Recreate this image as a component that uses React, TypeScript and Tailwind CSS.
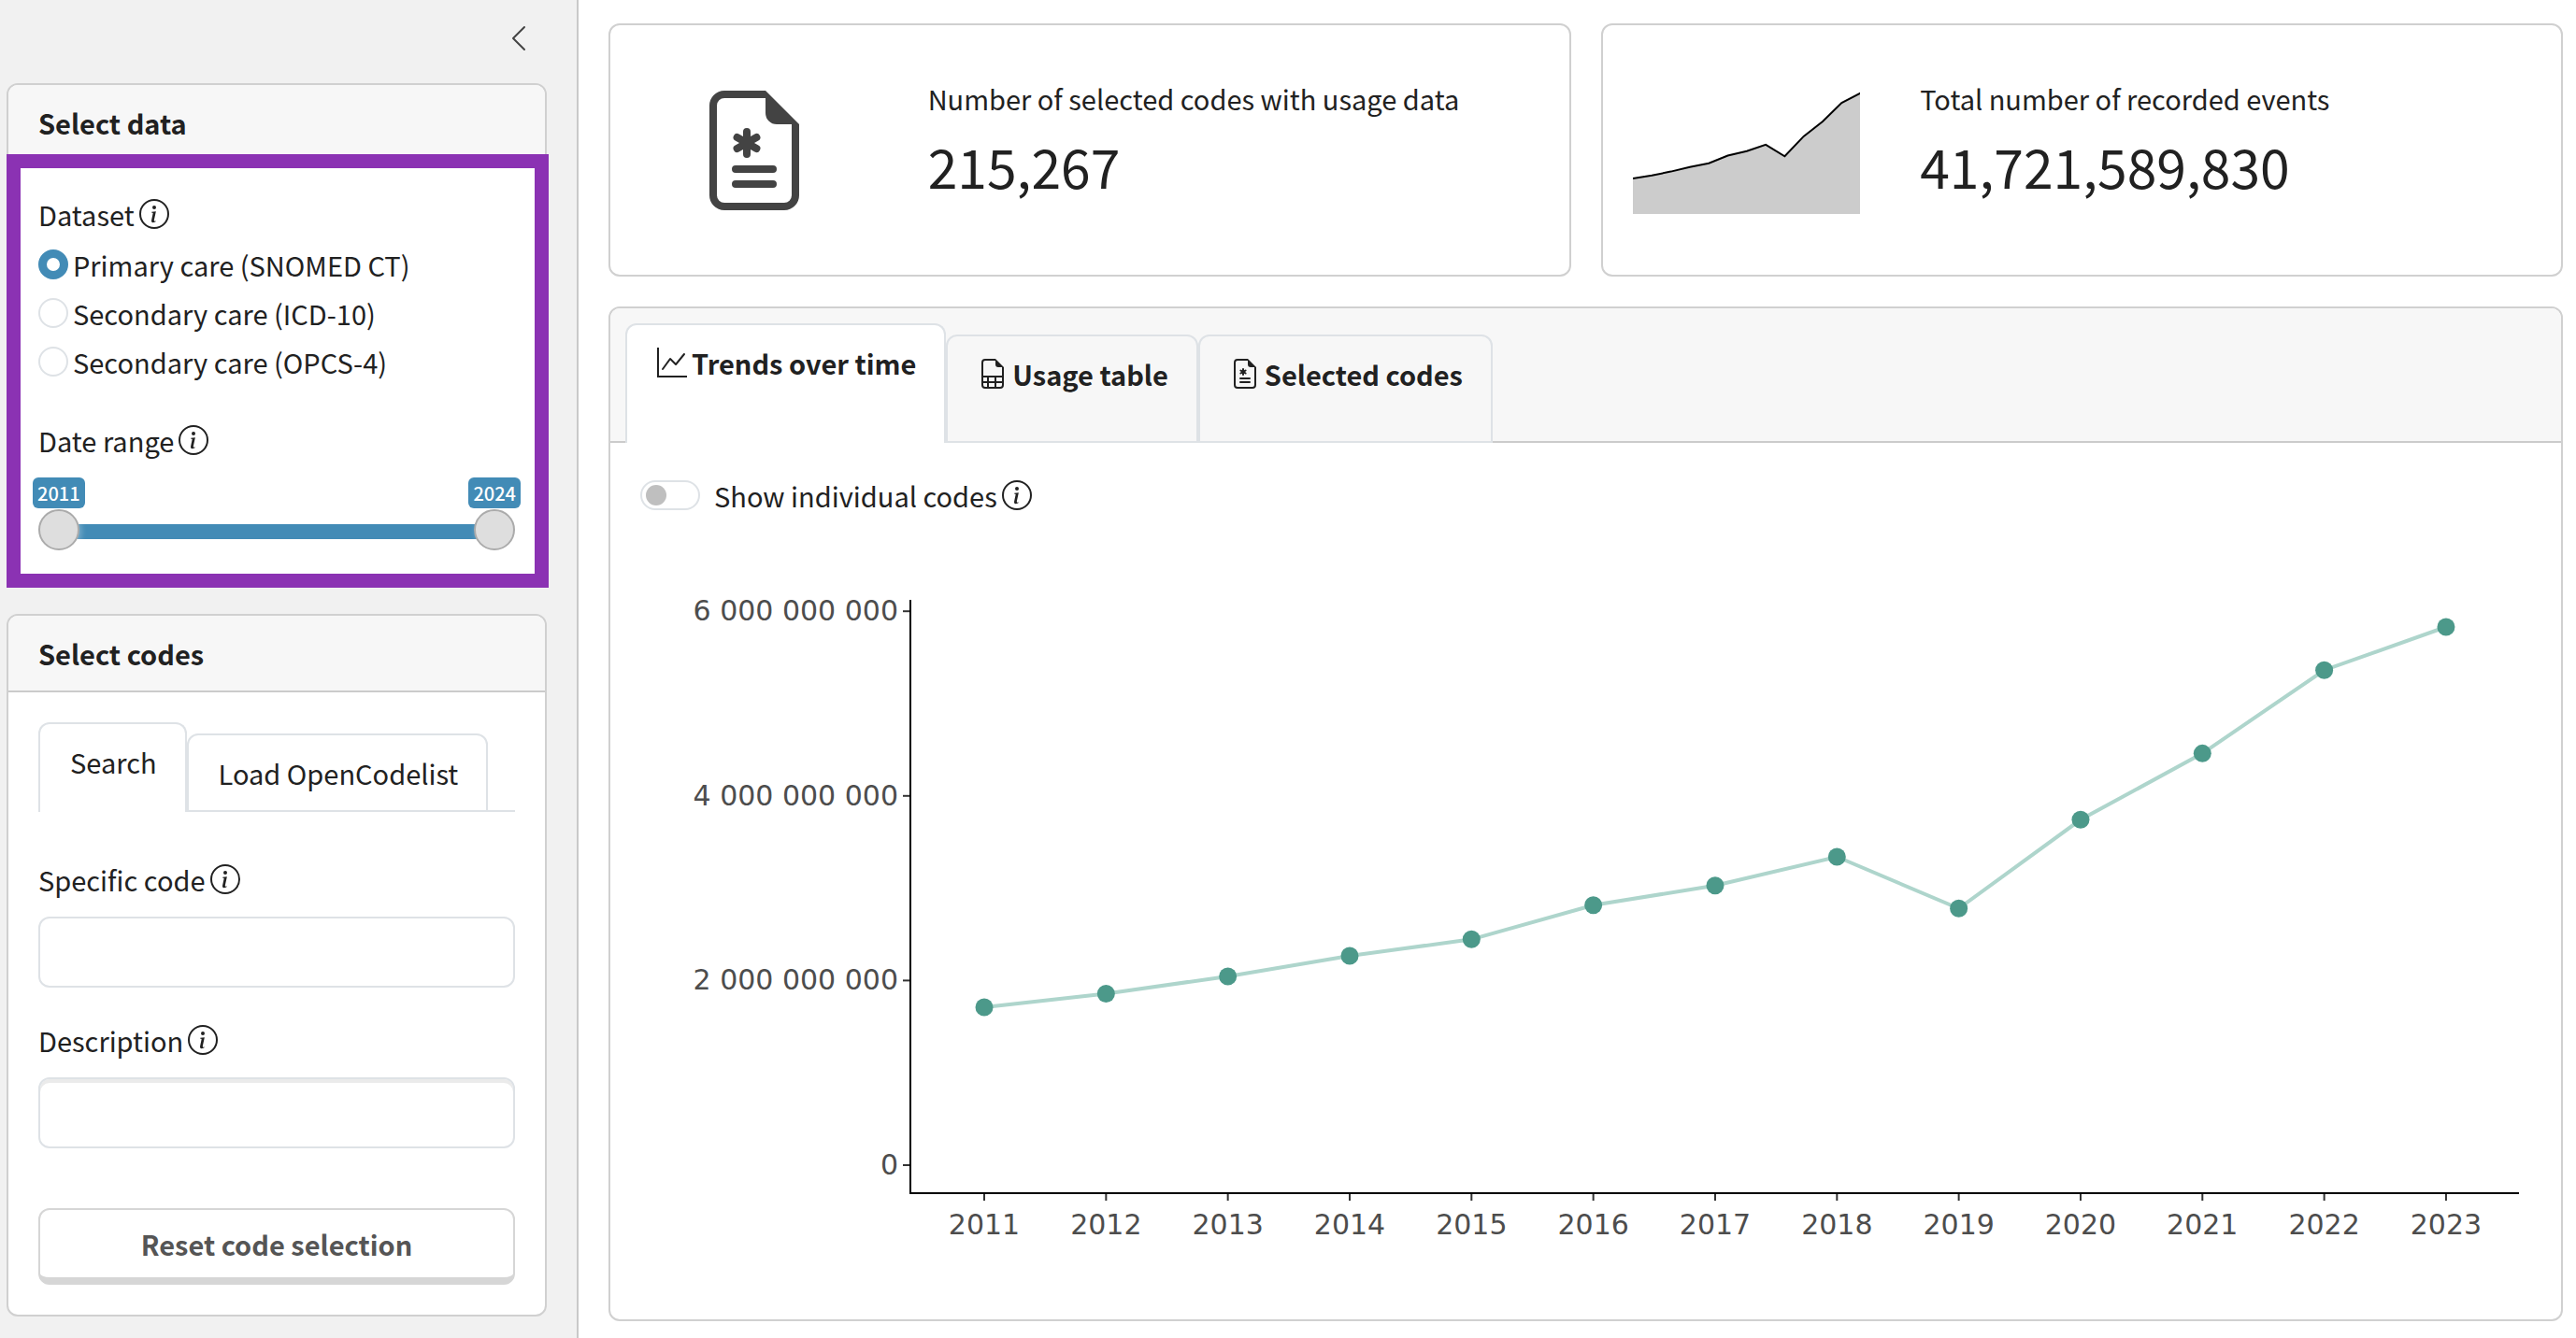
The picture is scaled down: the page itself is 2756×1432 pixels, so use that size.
import { useState, type ReactNode } from "react";
import {
  BsChevronLeft,
  BsFileEarmarkMedical,
  BsFileEarmarkSpreadsheet,
  BsGraphUp,
  BsInfoCircle,
} from "react-icons/bs";

const YEARS = [2011, 2012, 2013, 2014, 2015, 2016, 2017, 2018, 2019, 2020, 2021, 2022, 2023];
// Recorded events per year, in millions.
const EVENTS = [1711, 1857, 2045, 2267, 2446, 2816, 3029, 3340, 2780, 3742, 4460, 5362, 5830];

function InfoButton({ label }: { label: string }) {
  return (
    <button type="button" aria-label={label} className="shrink-0">
      <BsInfoCircle className="size-8" />
    </button>
  );
}

function CardHeader({ children }: { children: ReactNode }) {
  return (
    <h2 className="rounded-t-[10px] border-b-2 border-[#cbcbcb] bg-[#f7f7f7] px-8 py-4 font-bold">
      {children}
    </h2>
  );
}

function DatasetOptions() {
  const options = ["Primary care (SNOMED CT)", "Secondary care (ICD-10)", "Secondary care (OPCS-4)"];
  const [selected, setSelected] = useState(options[0]);
  return (
    <div role="radiogroup" aria-labelledby="dataset-label" className="mt-1.5 flex flex-col gap-1">
      {options.map((option) => (
        <label key={option} className="flex items-center gap-[5px]">
          <input
            type="radio"
            name="dataset"
            value={option}
            checked={selected === option}
            onChange={() => setSelected(option)}
            className="size-8 shrink-0 appearance-none rounded-full border-2 border-[#dee2e6] bg-white checked:border-[9px] checked:border-[#428bb6]"
          />
          {option}
        </label>
      ))}
    </div>
  );
}

const THUMB =
  "pointer-events-none absolute inset-0 h-11 w-full appearance-none bg-transparent [&::-webkit-slider-thumb]:pointer-events-auto [&::-webkit-slider-thumb]:size-11 [&::-webkit-slider-thumb]:appearance-none [&::-webkit-slider-thumb]:rounded-full [&::-webkit-slider-thumb]:border-2 [&::-webkit-slider-thumb]:border-[#ababab] [&::-webkit-slider-thumb]:bg-[#dedede] [&::-webkit-slider-thumb]:shadow-[2px_2px_6px_rgba(255,255,255,0.3)]";

function DateRange() {
  const [from, setFrom] = useState(2011);
  const [to, setTo] = useState(2024);
  return (
    <div className="mt-4">
      <div className="-mx-1.5 flex justify-between text-[20px] leading-[33px] text-white">
        <output className="rounded-md bg-[#428bb6] px-[5px] font-medium">{from}</output>
        <output className="rounded-md bg-[#428bb6] px-[5px] font-medium">{to}</output>
      </div>
      <div className="relative mt-px flex h-11 items-center px-5 pt-1">
        <div className="h-4 w-full bg-[#428bb6]" />
        <input
          type="range"
          aria-label="First year"
          min={2011}
          max={2024}
          value={from}
          onChange={(e) => setFrom(Math.min(Number(e.target.value), to))}
          className={THUMB}
        />
        <input
          type="range"
          aria-label="Last year"
          min={2011}
          max={2024}
          value={to}
          onChange={(e) => setTo(Math.max(Number(e.target.value), from))}
          className={THUMB}
        />
      </div>
    </div>
  );
}

function Sidebar() {
  return (
    <aside className="flex w-[619px] shrink-0 flex-col border-r-2 border-[#c9c9c9] bg-[#f1f1f1] pt-[25px] pr-8 pb-6 pl-[7px]">
      <button type="button" aria-label="Collapse sidebar" className="mr-[14px] self-end text-[#444444]">
        <BsChevronLeft className="size-8" />
      </button>

      <section className="mt-8 rounded-xl border-2 border-[#d0d0d0] bg-white">
        <CardHeader>Select data</CardHeader>
        <div className="relative px-8 pt-8 pb-9">
          <div className="flex items-center gap-[5px]">
            <span id="dataset-label">Dataset</span>
            <InfoButton label="About datasets" />
          </div>
          <DatasetOptions />
          <div className="mt-9 flex items-center gap-[5px]">
            <span>Date range</span>
            <InfoButton label="About the date range" />
          </div>
          <DateRange />
          <div className="pointer-events-none absolute -top-2 -right-1 -bottom-1 -left-0.5 border-[15px] border-[#8b32b3]" />
        </div>
      </section>

      <section className="mt-[30px] rounded-xl border-2 border-[#d0d0d0] bg-white">
        <CardHeader>Select codes</CardHeader>
        <div className="p-8">
          <div role="tablist" className="flex items-end border-b-2 border-[#dee2e6]">
            <button
              type="button"
              role="tab"
              aria-selected="true"
              className="-mb-0.5 flex h-24 items-start rounded-t-xl border-2 border-b-0 border-[#dee2e6] bg-white pt-4 pr-[30px] pl-8"
            >
              Search
            </button>
            <button
              type="button"
              role="tab"
              aria-selected="false"
              className="-mb-0.5 flex h-[84px] items-start rounded-t-xl border-2 border-[#dee2e6] bg-white pt-4 pr-[30px] pl-8"
            >
              Load OpenCodelist
            </button>
          </div>
          <div className="mt-12 flex items-center gap-[5px]">
            <label htmlFor="code">Specific code</label>
            <InfoButton label="About specific codes" />
          </div>
          <input
            id="code"
            type="text"
            className="mt-4 block h-[76px] w-full rounded-xl border-2 border-[#dee2e6] bg-white px-6"
          />
          <div className="mt-8 flex items-center gap-[5px]">
            <label htmlFor="description">Description</label>
            <InfoButton label="About descriptions" />
          </div>
          <input
            id="description"
            type="text"
            className="mt-4 block h-[76px] w-full rounded-xl border-2 border-[#dee2e6] bg-white px-6 shadow-[inset_0_4px_0_#ebebeb]"
          />
          <button
            type="button"
            className="mt-16 block h-[82px] w-full rounded-xl border-2 border-b-8 border-[#d6d6d6] bg-white font-bold text-[#555555]"
          >
            Reset code selection
          </button>
        </div>
      </section>
    </aside>
  );
}

function ValueBox({ title, value, showcase }: { title: string; value: string; showcase: ReactNode }) {
  return (
    <section className="flex h-[271px] rounded-xl border-2 border-[#d0d0d0] bg-white">
      <div className="flex w-[30%] items-center justify-center px-8">{showcase}</div>
      <div className="flex-1 px-8 pt-[54px]">
        <p>{title}</p>
        <p className="mt-2.5 text-[57px] leading-[76px]">{value}</p>
      </div>
    </section>
  );
}

function Sparkline() {
  const points = EVENTS.map((v, i) => `${(i * 244) / 12},${(136 - v * 0.0222).toFixed(1)}`).join(" ");
  return (
    <svg viewBox="0 0 244 136" preserveAspectRatio="none" className="h-[136px] w-full" aria-hidden="true">
      <polygon points={`0,136 ${points} 244,136`} fill="#cccccc" />
      <polyline points={points} fill="none" stroke="#000" strokeWidth="2" />
    </svg>
  );
}

function TrendChart() {
  const x = (i: number) => 368 + i * 130.33;
  const y = (v: number) => 667 - v * 0.0988;
  return (
    <svg
      viewBox="0 0 2023 800"
      role="img"
      aria-label="Recorded events per year"
      className="mt-[26px] block w-full font-['DejaVu_Sans',sans-serif] text-[30px]"
    >
      {[0, 2000, 4000, 6000].map((v) => (
        <g key={v}>
          <line x1="281" x2="289" y1={y(v)} y2={y(v)} stroke="#333" strokeWidth="2" />
          <text x="276" y={y(v) + 10} textAnchor="end" fill="#4d4d4d">
            {v === 0 ? "0" : `${v / 1000} 000 000 000`}
          </text>
        </g>
      ))}
      {YEARS.map((year, i) => (
        <g key={year}>
          <line x1={x(i)} x2={x(i)} y1="697" y2="705" stroke="#333" strokeWidth="2" />
          <text x={x(i)} y="741" textAnchor="middle" fill="#4d4d4d">
            {year}
          </text>
        </g>
      ))}
      <path d="M289 62V697H2010" fill="none" stroke="#000" strokeWidth="2" />
      <polyline
        points={EVENTS.map((v, i) => `${x(i)},${y(v)}`).join(" ")}
        fill="none"
        stroke="#aed5cc"
        strokeWidth="4"
      />
      {EVENTS.map((v, i) => (
        <circle key={YEARS[i]} cx={x(i)} cy={y(v)} r="9.5" fill="#4c998a" />
      ))}
    </svg>
  );
}

const TABS = [
  { label: "Trends over time", Icon: BsGraphUp },
  { label: "Usage table", Icon: BsFileEarmarkSpreadsheet },
  { label: "Selected codes", Icon: BsFileEarmarkMedical },
];

export default function App() {
  return (
    <div className="flex min-h-screen bg-white font-['Noto_Sans_CJK_SC','Noto_Sans',sans-serif] text-[29px] leading-[48px] text-[#212121]">
      <Sidebar />
      <main className="min-w-0 flex-1 pt-[25px] pr-[14px] pb-[18px] pl-8">
        <div className="grid grid-cols-2 gap-8">
          <ValueBox
            title="Number of selected codes with usage data"
            value="215,267"
            showcase={<BsFileEarmarkMedical className="size-32 text-[#434343]" />}
          />
          <ValueBox title="Total number of recorded events" value="41,721,589,830" showcase={<Sparkline />} />
        </div>

        <section className="mt-8 rounded-xl border-2 border-[#d0d0d0] bg-white">
          <div
            role="tablist"
            className="flex items-end rounded-t-[10px] border-b-2 border-[#cbcbcb] bg-[#f7f7f7] px-4 pt-4"
          >
            {TABS.map(({ label, Icon }, i) => (
              <button
                key={label}
                type="button"
                role="tab"
                aria-selected={i === 0}
                className={
                  i === 0
                    ? "-mb-0.5 flex h-32 items-start rounded-t-xl border-2 border-b-0 border-[#dee2e6] bg-white pt-4 pr-[30px] pl-8 font-bold"
                    : "-mb-0.5 flex h-[116px] items-start rounded-t-xl border-2 border-[#dee2e6] bg-[#f7f7f7] pt-4 pr-[30px] pl-8 font-bold"
                }
              >
                <span className="flex items-center gap-[5px]">
                  <Icon className="size-8" />
                  {label}
                </span>
              </button>
            ))}
          </div>
          <div className="px-8 pt-8 pb-8">
            <div className="flex items-center gap-[5px]">
              <label className="flex items-center gap-[15px]">
                <input
                  type="checkbox"
                  role="switch"
                  className="flex h-8 w-16 appearance-none items-center rounded-full border-2 border-[#dee2e6] bg-white px-1 before:size-[22px] before:rounded-full before:bg-[#bfbfbf] checked:justify-end checked:border-[#428bb6] checked:before:bg-[#428bb6]"
                />
                Show individual codes
              </label>
              <InfoButton label="About individual codes" />
            </div>
            <TrendChart />
          </div>
        </section>
      </main>
    </div>
  );
}
